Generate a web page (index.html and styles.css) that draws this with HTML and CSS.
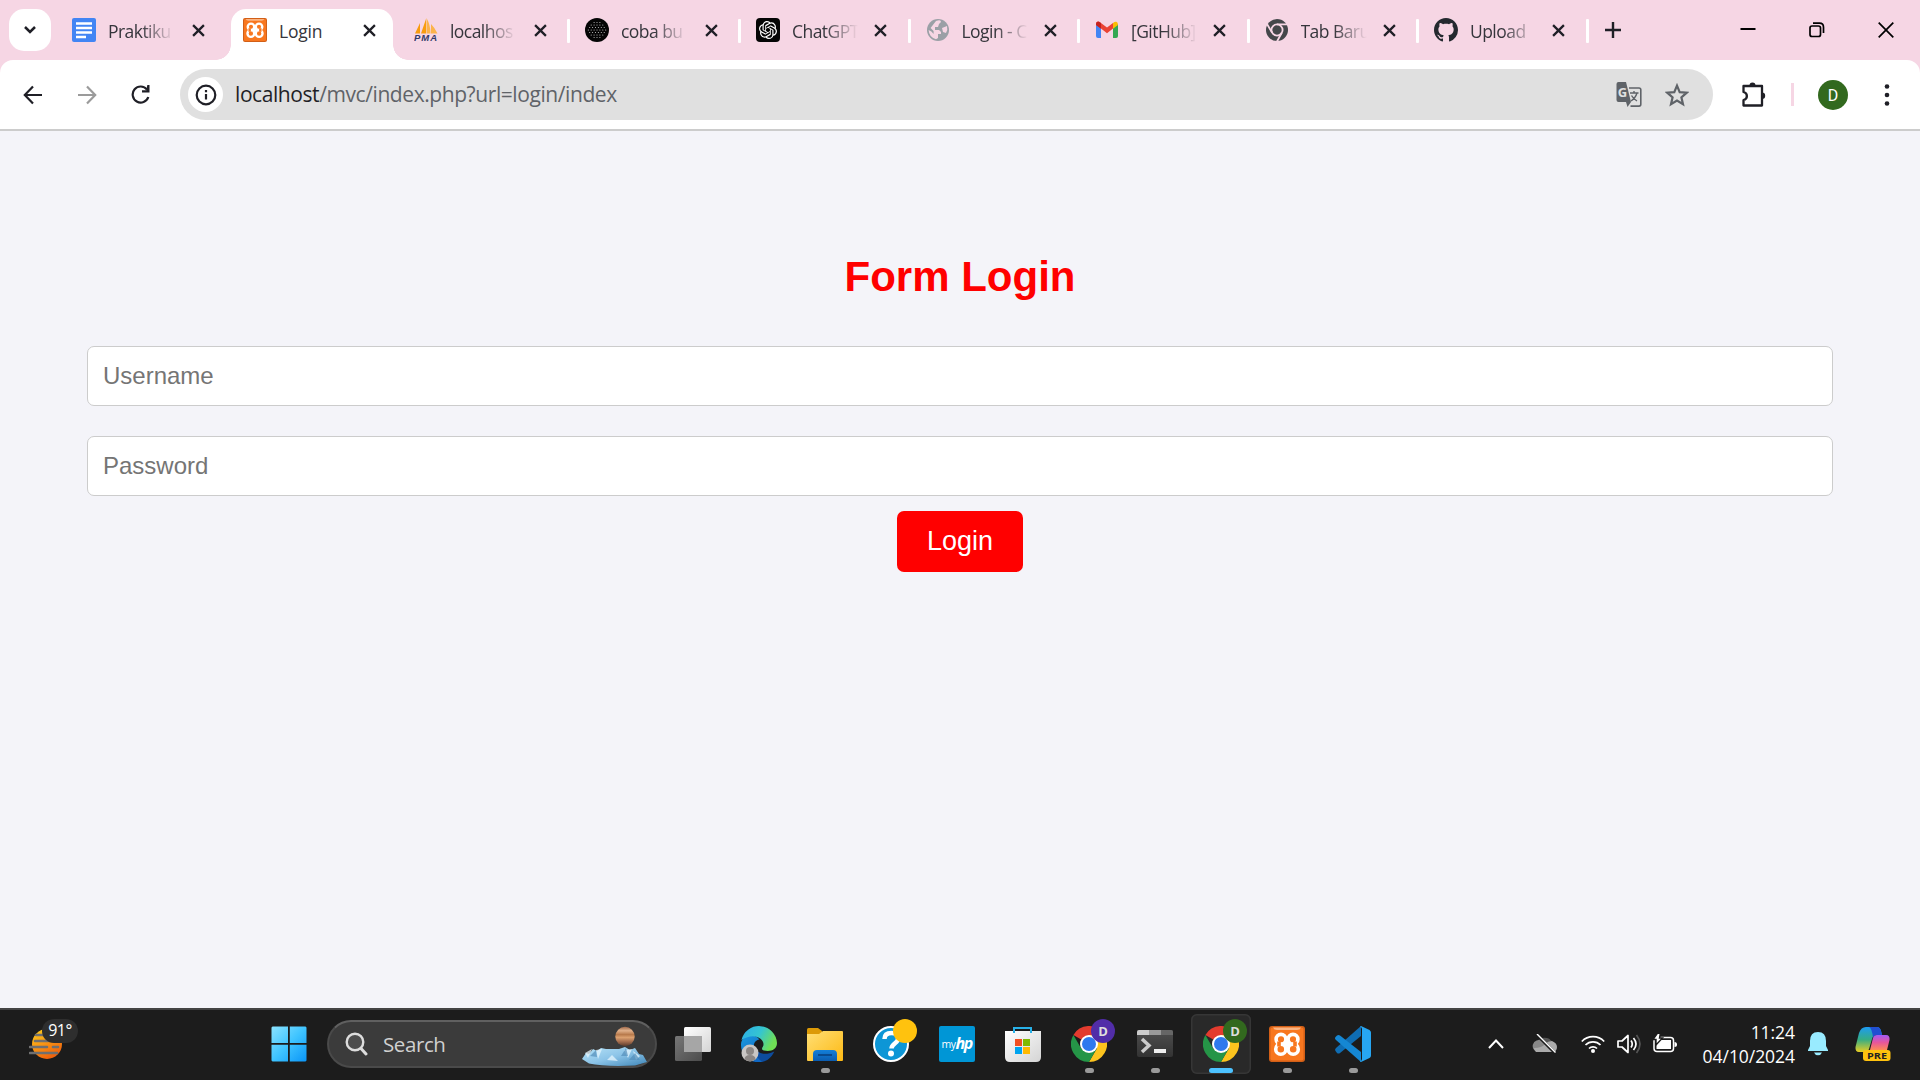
FILE: index.html
```html
<!DOCTYPE html>
<html lang="id">
<head>
<meta charset="utf-8">
<title>Login</title>
<link rel="stylesheet" href="styles.css">
</head>
<body>
<svg class="defs" width="0" height="0" aria-hidden="true">
  <defs>
    <symbol id="close" viewBox="0 0 12 12"><path d="M1 1l10 10M11 1L1 11" stroke="#1f1f26" stroke-width="2.1" fill="none"/></symbol>
    <symbol id="xampp" viewBox="0 0 36 36">
      <rect width="36" height="36" rx="3" fill="#d25f17"/>
      <rect x="1.500" y="1.500" width="33" height="33" rx="2" fill="#f8771f"/>
      <path d="M4 1.500h28q-1 2.500-4 2.500H8q-3 0-4-2.500z" fill="#fbb583"/>
      <g fill="none" stroke="#fff" stroke-width="3.600"><circle cx="12" cy="13.300" r="4.900"/><circle cx="24" cy="13.300" r="4.900"/><circle cx="11.800" cy="23.200" r="5.100"/><circle cx="24.200" cy="23.200" r="5.100"/></g>
      <path d="M10 15.500v5M26 15.500v5" stroke="#f8771f" stroke-width="3.600"/>
      <path d="M15 18h6" stroke="#fff" stroke-width="5"/>
    </symbol>
    <symbol id="chrome" viewBox="0 0 36 36">
      <path d="M18 18L2.400 9A18 18 0 0 1 33.600 9z" fill="#e33b2e"/>
      <path d="M18 9h15.600A18 18 0 0 1 18 36l7.800-13.500z" fill="#fcc31e"/>
      <path d="M2.400 9A18 18 0 0 0 18 36l7.800-13.500L18 27l-7.800-4.500z" fill="#259547"/>
      <circle cx="18" cy="18" r="9" fill="#fff"/><circle cx="18" cy="18" r="7" fill="#2e79ee"/>
    </symbol>
    <linearGradient id="win" x2="1" y2="1"><stop stop-color="#8be3ff"/><stop offset=".5" stop-color="#3fc4ff"/><stop offset="1" stop-color="#0a95f7"/></linearGradient>
    <linearGradient id="sun" x2=".5" y2="1"><stop stop-color="#ffd21c"/><stop offset="1" stop-color="#f0620c"/></linearGradient>
    <linearGradient id="white" x2="1" y2="1"><stop stop-color="#fff"/><stop offset="1" stop-color="#d4d4d4"/></linearGradient>
    <linearGradient id="grey" x2="1" y2="1"><stop stop-color="#777"/><stop offset="1" stop-color="#4c4c4c"/></linearGradient>
    <linearGradient id="edgeTop" x2="1" y2=".4"><stop stop-color="#2badeb"/><stop offset=".55" stop-color="#35c5d0"/><stop offset="1" stop-color="#6fdf55"/></linearGradient>
    <linearGradient id="edgeMid" x2=".6" y2="1"><stop stop-color="#1a9be0"/><stop offset="1" stop-color="#0f68c4"/></linearGradient>
    <linearGradient id="folder" x2="1" y2="1"><stop stop-color="#ffdf76"/><stop offset="1" stop-color="#fdb913"/></linearGradient>
    <linearGradient id="dock" y2="1" x2="0"><stop stop-color="#137fd9"/><stop offset="1" stop-color="#0b5cb0"/></linearGradient>
    <linearGradient id="term" x2="0" y2="1"><stop stop-color="#4f4f4f"/><stop offset="1" stop-color="#333"/></linearGradient>
    <linearGradient id="copA" x2="0" y2="1"><stop stop-color="#1d9bf2"/><stop offset=".5" stop-color="#35ad85"/><stop offset="1" stop-color="#e9cd22"/></linearGradient>
    <linearGradient id="copB" x2="0" y2="1"><stop stop-color="#a35bf5"/><stop offset=".5" stop-color="#e8569b"/><stop offset="1" stop-color="#ff8a55"/></linearGradient>
    <linearGradient id="ice" x2="1" y2="1"><stop stop-color="#b7e3f7"/><stop offset=".5" stop-color="#8cc4e8"/><stop offset="1" stop-color="#3e86b8"/></linearGradient>
    <linearGradient id="planet" x2="0" y2="1"><stop stop-color="#a06a4c"/><stop offset=".2" stop-color="#e0b08a"/><stop offset=".4" stop-color="#b87a4c"/><stop offset=".55" stop-color="#dba06f"/><stop offset=".75" stop-color="#a87050"/><stop offset="1" stop-color="#593a2c"/></linearGradient>
  </defs>
</svg>

<div class="screen">
  <header class="tabstrip">
    <button class="tab-search" aria-label="Search tabs"><svg width="14" height="10" viewBox="0 0 14 10"><path d="M2 2l5 5 5-5" fill="none" stroke="#1f1f26" stroke-width="2.5"/></svg></button>
    <nav class="tabs">
      <div class="tab">
        <svg class="favicon" viewBox="0 0 24 24"><rect width="24" height="24" rx="2" fill="#4285f4"/><path d="M4 5.500h16M4 10h16M4 14.500h16M4 19h10" stroke="#fff" stroke-width="2.300"/></svg>
        <span class="title">Praktiku</span><svg class="close"><use href="#close"/></svg>
      </div>
      <div class="tab active">
        <svg class="favicon"><use href="#xampp"/></svg>
        <span class="title">Login</span><svg class="close"><use href="#close"/></svg>
      </div>
      <div class="tab">
        <svg class="favicon" viewBox="0 0 24 24"><path d="M1 15.500L6 5v10.500zM7 15.500L12 1v14.500z" fill="#f89c0e"/><path d="M12.500 15.500V0q4 7 4 15.500zM17 15.500V6q4 4 6.500 9.500z" fill="#fbb34b"/><text x="0" y="23" class="pma" textLength="23">PMA</text></svg>
        <span class="title">localhos</span><svg class="close"><use href="#close"/></svg>
      </div>
      <div class="tab">
        <svg class="favicon" viewBox="0 0 24 24"><circle cx="12" cy="12" r="12" fill="#050505"/><g fill="none" stroke="#ccc" stroke-width="1.100" stroke-linecap="round" stroke-dasharray="0 2.900"><path d="M9.100 4.500h6M6.200 7h12M4.700 9.500h15M3.300 12h18M4.700 14.500h15M6.200 17h12M9.100 19.500h6"/></g></svg>
        <span class="title">coba bu</span><svg class="close"><use href="#close"/></svg>
      </div>
      <div class="tab">
        <svg class="favicon" viewBox="0 0 24 24"><rect width="24" height="24" rx="4" fill="#050505"/><path transform="translate(3 3) scale(.75)" fill="#fff" d="M22.2819 9.8211a5.9847 5.9847 0 0 0-.5157-4.9108 6.0462 6.0462 0 0 0-6.5098-2.9A6.0651 6.0651 0 0 0 4.9807 4.1818a5.9847 5.9847 0 0 0-3.9977 2.9 6.0462 6.0462 0 0 0 .7427 7.0966 5.98 5.98 0 0 0 .511 4.9107 6.051 6.051 0 0 0 6.5146 2.9001A5.9847 5.9847 0 0 0 13.2599 24a6.0557 6.0557 0 0 0 5.7718-4.2058 5.9894 5.9894 0 0 0 3.9977-2.9001 6.0557 6.0557 0 0 0-.7475-7.0729zm-9.022 12.6081a4.4755 4.4755 0 0 1-2.8764-1.0408l.1419-.0804 4.7783-2.7582a.7948.7948 0 0 0 .3927-.6813v-6.7369l2.02 1.1686a.071.071 0 0 1 .038.0615v5.5826a4.504 4.504 0 0 1-4.4945 4.4944zm-9.6607-4.1254a4.4708 4.4708 0 0 1-.5346-3.0137l.142.0852 4.783 2.7582a.7712.7712 0 0 0 .7806 0l5.8428-3.3685v2.3324a.0804.0804 0 0 1-.0332.0615L9.74 19.9502a4.4992 4.4992 0 0 1-6.1408-1.6464zM2.3408 7.8956a4.485 4.485 0 0 1 2.3655-1.9728V11.6a.7664.7664 0 0 0 .3879.6765l5.8144 3.3543-2.0201 1.1685a.0757.0757 0 0 1-.071 0l-4.8303-2.7865A4.504 4.504 0 0 1 2.3408 7.8956zm16.5963 3.8558L13.1038 8.364 15.1192 7.2a.0757.0757 0 0 1 .071 0l4.8303 2.7913a4.4944 4.4944 0 0 1-.6765 8.1042v-5.6772a.79.79 0 0 0-.407-.667zm2.0107-3.0231l-.142-.0852-4.7735-2.7818a.7759.7759 0 0 0-.7854 0L9.409 9.2297V6.8974a.0662.0662 0 0 1 .0284-.0615l4.8303-2.7866a4.4992 4.4992 0 0 1 6.6802 4.66zM8.3065 12.863l-2.02-1.1638a.0804.0804 0 0 1-.038-.0567V6.0742a4.4992 4.4992 0 0 1 7.3757-3.4537l-.142.0805L8.704 5.459a.7948.7948 0 0 0-.3927.6813zm1.0976-2.3654l2.602-1.4998 2.6069 1.4998v2.9994l-2.5974 1.4997-2.6067-1.4997Z"/></svg>
        <span class="title">ChatGPT</span><svg class="close"><use href="#close"/></svg>
      </div>
      <div class="tab">
        <svg class="favicon" viewBox="0 0 24 24"><circle cx="12" cy="12" r="11" fill="#9aa0a6"/><path d="M10 3q5-2 5 1l-2 2-1 3H9v3h4l2 2v2h-3v4l-2 1.300Q3 19 2.600 12q3 1 5 4v-3l-3-3zM16 10l5-2q1 4-1 7l-3-1z" fill="#f6d6e4"/></svg>
        <span class="title">Login - C</span><svg class="close"><use href="#close"/></svg>
      </div>
      <div class="tab">
        <svg class="favicon" viewBox="0 0 24 24"><path d="M1 6v12q0 2 2 2h3V9z" fill="#4285f4"/><path d="M18 9v11h3q2 0 2-2V6z" fill="#34a853"/><path d="M1 6q0-2 2-2.400 1.300 0 2.300.8L12 9.500l6-4.500v5.500l-6 4.700-6-4.700-5-3.500z" fill="#ea4335"/><path d="M1 6q0-2 2-2.400 1.300 0 3 1.500v5.700L1 7z" fill="#c5221f"/><path d="M18 5q2-1.700 3.300-1.200Q23 4.400 23 7l-5 3.700z" fill="#fbbc04"/></svg>
        <span class="title">[GitHub]</span><svg class="close"><use href="#close"/></svg>
      </div>
      <div class="tab">
        <svg class="favicon" viewBox="0 0 24 24"><circle cx="12" cy="12" r="11" fill="#44474a"/><circle cx="12" cy="12" r="5.600" fill="none" stroke="#f6d6e4" stroke-width="1.800"/><path d="M12 6.400h10M7.200 14.800L2 6M16.800 14.800L12 23.500" stroke="#f6d6e4" stroke-width="1.800"/></svg>
        <span class="title">Tab Baru</span><svg class="close"><use href="#close"/></svg>
      </div>
      <div class="tab">
        <svg class="favicon" viewBox="0 0 16 16"><path fill="#24292f" d="M8 0C3.580 0 0 3.580 0 8c0 3.540 2.290 6.530 5.470 7.590.4.070.55-.17.55-.38 0-.19-.01-.82-.01-1.490-2.010.37-2.530-.49-2.690-.94-.09-.23-.48-.94-.82-1.130-.28-.15-.68-.52-.01-.53.63-.01 1.080.58 1.230.82.72 1.210 1.870.87 2.330.66.070-.52.28-.87.51-1.070-1.780-.2-3.640-.89-3.640-3.950 0-.87.31-1.590.82-2.150-.08-.2-.36-1.020.08-2.120 0 0 .67-.21 2.200.82.64-.18 1.320-.27 2-.27s1.360.09 2 .27c1.530-1.040 2.200-.82 2.200-.82.44 1.100.16 1.920.08 2.120.51.56.82 1.270.82 2.150 0 3.070-1.870 3.750-3.650 3.950.29.25.54.73.54 1.480 0 1.070-.01 1.930-.01 2.200 0 .21.15.46.55.38A8.010 8.010 0 0 0 16 8c0-4.420-3.580-8-8-8z"/></svg>
        <span class="title">Upload</span><svg class="close"><use href="#close"/></svg>
      </div>
    </nav>
    <svg class="new-tab" width="16" height="16" viewBox="0 0 16 16"><path d="M8 0v16M0 8h16" stroke="#1f1f26" stroke-width="2.400"/></svg>
    <div class="window-controls">
      <svg width="16" height="16" viewBox="0 0 16 16"><path d="M.5 7h15" stroke="#000" stroke-width="2"/></svg>
      <svg width="16" height="16" viewBox="0 0 16 16"><rect x="1" y="4" width="10.500" height="10.500" rx="2" fill="none" stroke="#000" stroke-width="1.700"/><path d="M4 1.200h6.500q4 0 4 4V11" fill="none" stroke="#000" stroke-width="1.700"/></svg>
      <svg width="16" height="16" viewBox="0 0 16 16"><path d="M.7.700l14.600 14.600M15.300.700L.7 15.300" stroke="#000" stroke-width="1.700"/></svg>
    </div>
  </header>

  <div class="toolbar-wrap">
  <div class="toolbar">
    <svg class="nav-icon" viewBox="0 0 20 20"><path d="M19 10H2M10 1.500L1.800 10l8.200 8.500" fill="none" stroke="#1f1f26" stroke-width="2.200"/></svg>
    <svg class="nav-icon" viewBox="0 0 20 20"><path d="M1 10h17M10 1.500l8.200 8.500-8.200 8.500" fill="none" stroke="#9b9b9b" stroke-width="2.200"/></svg>
    <svg class="nav-icon" viewBox="0 0 20 20"><path d="M17.300 12A8 8 0 1 1 16 4.600" fill="none" stroke="#1f1f26" stroke-width="2.200"/><path d="M18.500 0v7.500H11V5.300h4.500L16.300 0z" fill="#1f1f26"/></svg>
    <div class="omnibox">
      <span class="site-info"><svg width="22" height="22" viewBox="0 0 22 22"><circle cx="11" cy="11" r="9.300" fill="none" stroke="#1f1f26" stroke-width="2.200"/><path d="M11 10v5.500M11 6v2.300" stroke="#1f1f26" stroke-width="2.200"/></svg></span>
      <span class="url"><b>localhost</b>/mvc/index.php?url=login/index</span>
      <svg class="translate" width="26" height="26" viewBox="0 0 26 26"><path d="M13 6h10q1.800 0 1.800 1.800v14.500q0 1.800-1.800 1.800h-8.500" fill="none" stroke="#5f6368" stroke-width="1.600"/><path d="M14 11h8.500M18 9v2M21 11q-1.500 5-6 8M15.500 13.500q2 3.500 5.500 5.500" fill="none" stroke="#5f6368" stroke-width="1.400"/><path d="M2.500 0H10l5 20 -3.500 5-1.500-5H2.500Q.5 20 .5 18V2q0-2 2-2z" fill="#5f6368"/><text x="1.700" y="15" class="glyph-g">G</text></svg>
      <svg class="star" width="24" height="24" viewBox="0 0 24 24"><path d="M12 2.600l2.700 6.500 7 .6-5.300 4.600 1.600 6.900-6-3.700-6 3.700 1.600-6.900L2.300 9.700l7-.6z" fill="none" stroke="#5f6368" stroke-width="2.200"/></svg>
    </div>
    <svg class="puzzle" width="26" height="26" viewBox="0 0 26 26"><path d="M2.500 4h18.500v19.500H2.500V18c4.500-1 4.500-7 0-8z" fill="none" stroke="#1f1f26" stroke-width="2.300" stroke-linejoin="round"/><path d="M8.500 3.500a3 3 0 0 1 6 0zM21 10.500a3.200 3.200 0 0 1 0 6.400z" fill="#1f1f26"/></svg>
    <i class="divider"></i>
    <span class="avatar">D</span>
    <svg class="menu" width="6" height="22" viewBox="0 0 6 22"><circle cx="3" cy="2.500" r="2.300"/><circle cx="3" cy="11" r="2.300"/><circle cx="3" cy="19.500" r="2.300"/></svg>
  </div>
  </div>

  <main class="page">
    <h1>Form Login</h1>
    <form class="login-form">
      <input type="text" placeholder="Username">
      <input type="password" placeholder="Password">
      <button type="button">Login</button>
    </form>
  </main>

  <footer class="taskbar">
    <div class="weather">
      <svg width="36" height="40" viewBox="0 0 36 40"><circle cx="18" cy="20" r="15" fill="url(#sun)"/><path d="M7 11h13M6 17h13M1 23h17M24 23h5M1 29h27" stroke="#6f6f6f" stroke-width="2.600" stroke-linecap="round"/></svg>
      <span class="temp">91°</span>
    </div>
    <svg class="start" width="36" height="36" viewBox="0 0 36 36"><path d="M1.500.500H17V17H.5V1.500zM18.800.500h15.700l1 1V17H18.800zM.5 18.800H17v16.700H1.500l-1-1zM18.800 18.800h16.700v15.700l-1 1H18.800z" fill="url(#win)"/></svg>
    <div class="search">
      <svg width="23" height="24" viewBox="0 0 23 24"><circle cx="10" cy="10" r="8.300" fill="#4d4d4d" stroke="#ddd" stroke-width="2.400"/><path d="M16 16.500l5 5.500" stroke="#ddd" stroke-width="3" stroke-linecap="round"/></svg>
      <span>Search</span>
      <svg class="scene" width="66" height="48" viewBox="0 0 66 48"><path d="M1 39l4-6 3 1 4-5 4 2 4-3 5 1h13l6-2 5 3 5-2 4 6 4 1 4 7-12 3.500q-30 1.500-46-2z" fill="url(#ice)"/><path d="M4 33l3 5 4-9zM15 30l2 9 4-10zM43 30l4 8 4-9zM52 31l3 9 4-4zM26 40l5-5 6 6z" fill="#e5f5fd" opacity=".75"/><path d="M9 36l6-6 1 7zM40 36l5-8 2 8zM48 40l6-7 5 7z" fill="#548ebb" opacity=".7"/><circle cx="44" cy="16.500" r="9.700" fill="url(#planet)"/></svg>
    </div>
    <div class="apps">
      <div class="app"><svg viewBox="0 0 36 36"><rect x="9" y="1" width="27" height="25" rx="1.500" fill="url(#white)"/><rect x="0" y="10" width="27" height="25" rx="1.500" fill="url(#grey)"/><rect x="9" y="10" width="18" height="16" fill="#a6a6a6"/></svg></div>
      <div class="app"><svg viewBox="0 0 36 36"><path d="M14 20c1 7 9 10.500 19.300 5.500C30 32.500 25 36 19 36c-7-2-9-10-5-16z" fill="#0d4c9e"/><path d="M0 19C0 9 12 6 18.500 13.500c-5 .5-7 5.500-5 11.500 1.500 5 4 8.500 7.500 10.800C9 38 0 30 0 19z" fill="url(#edgeMid)"/><path d="M.5 14A18 18 0 0 1 36 17c0 7-7 9-13 7.500-3-1-2-2.500-1-4C25 14 14 5 .5 14z" fill="url(#edgeTop)"/><circle cx="9" cy="27" r="8.500" fill="#c9c6c4"/><circle cx="9" cy="25" r="4" fill="#8b8684"/><path d="M3.500 33.500q0-4.500 5.500-4.500t5.500 4.500q-5 3.500-11 0z" fill="#8b8684"/></svg></div>
      <div class="app running"><svg viewBox="0 0 36 36"><path d="M0 3.500Q0 2 1.500 2H11l4 3v5H0z" fill="#dc9a07"/><path d="M0 8h12l4-3h19q1 0 1 1v28q0 1-1 1H1q-1 0-1-1z" fill="url(#folder)"/><path d="M6 35v-7q0-4 4-4h16q4 0 4 4v7z" fill="url(#dock)"/><path d="M11 29h14" stroke="#0a4687" stroke-width="1.800"/></svg></div>
      <div class="app"><svg viewBox="0 0 36 36"><circle cx="18" cy="18" r="17" fill="#0d96d6" stroke="#fff" stroke-width="2"/><path d="M11.500 13q0-6 7-6t6.500 6c0 4-6.500 4.500-6.500 9.500" fill="none" stroke="#fff" stroke-width="4.500"/><circle cx="18" cy="27.500" r="3" fill="#fff"/></svg><i class="badge yellow"></i></div>
      <div class="app"><svg viewBox="0 0 36 36"><rect width="36" height="36" rx="2" fill="#0096d6"/><text x="2.500" y="21.500" class="my">my<tspan class="hp" dy="1.500">hp</tspan></text></svg></div>
      <div class="app"><svg viewBox="0 0 36 36"><path d="M0 5h36v26q0 5-5 5H5q-5 0-5-5z" fill="url(#white)"/><path d="M9 7V2h17v5" fill="none" stroke="#28b1e8" stroke-width="2"/><path d="M10 13h7v7h-7z" fill="#f25022"/><path d="M18 13h7v7h-7z" fill="#7fba00"/><path d="M10 21h7v7h-7z" fill="#00a4ef"/><path d="M18 21h7v7h-7z" fill="#ffb900"/></svg></div>
      <div class="app running"><svg><use href="#chrome"/></svg><i class="badge purple">D</i></div>
      <div class="app running"><svg viewBox="0 0 36 36"><rect y="4" width="36" height="27" rx="2" fill="url(#term)"/><path d="M0 9V6q0-2 2-2h10v5z" fill="#ccc"/><path d="M12 4h12v5H12z" fill="#999"/><path d="M24 4h10q2 0 2 2v3H24z" fill="#666"/><path d="M5 13l7 6.500-7 6.500" fill="none" stroke="#ccc" stroke-width="3.500"/><rect x="17" y="23" width="12" height="4" fill="#eee"/></svg></div>
      <div class="app running current"><svg><use href="#chrome"/></svg><i class="badge green">D</i></div>
      <div class="app running"><svg><use href="#xampp"/></svg></div>
      <div class="app running"><svg viewBox="0 0 36 36"><path d="M26 0v10L5 27q-1.500 1-3 0L.5 25q-1-1.500.5-3z" fill="#0f6db3"/><path d="M26 36V26L5 9.500q-1.500-1-3 0L.5 11q-1 1.500.5 3z" fill="#1587d3"/><path d="M26 0l8.500 4Q36 5 36 6.500v23q0 1.500-1.500 2.500L26 36q-.5 0-1-1 2 0 2-2V3q0-2-2-2z" fill="#27a6f2"/></svg></div>
    </div>
    <div class="tray">
      <svg class="caret" width="18" height="12" viewBox="0 0 18 12"><path d="M2 10l7-7.500L16 10" fill="none" stroke="#fff" stroke-width="2"/></svg>
      <svg class="cloud" width="26" height="20" viewBox="0 0 26 20"><path d="M5 8a8 6.500 0 0 1 15 0l-8 5z" fill="#555"/><path d="M7 18a6 6 0 1 1 3-11l10 11z" fill="#888"/><path d="M4 18q-2-2-2-4 8 0 11-4 3-3 7-3 5 2 5 6 0 5-5 5z" fill="#aaa"/><path d="M5 1l18 18" stroke="#1c1c1c" stroke-width="3"/><path d="M5 0l18.500 18.500" stroke="#fff" stroke-width="1.400"/></svg>
      <div class="status">
        <svg width="24" height="20" viewBox="0 0 24 20"><path d="M.8 7.500a15.500 15.500 0 0 1 22.400 0M4.500 11a10.500 10.500 0 0 1 15 0M8 14.500a5.800 5.800 0 0 1 8 0" fill="none" stroke="#fff" stroke-width="1.700"/><circle cx="12" cy="17" r="2" fill="#fff"/></svg>
        <svg width="24" height="20" viewBox="0 0 24 20"><path d="M1 7h4l6-5.500v17L5 13H1z" fill="none" stroke="#fff" stroke-width="1.700" stroke-linejoin="round"/><path d="M14 6.500q2.500 3.500 0 7M16.500 4q5 6 0 12" fill="none" stroke="#fff" stroke-width="1.700"/><path d="M19.500 1q7 9 0 18" fill="none" stroke="#555" stroke-width="1.700"/></svg>
        <svg class="battery" width="24" height="20" viewBox="0 0 24 20"><rect x="1" y="3.500" width="19.500" height="14" rx="3" fill="none" stroke="#fff" stroke-width="1.500"/><rect x="3.500" y="6" width="14.500" height="9" fill="#fff"/><path d="M21.500 8q2.500 0 2.500 2.500T21.500 13z" fill="#fff"/><path d="M5-1.500L0 5.500h3V11l6.500-7H6.500L7.500-1.500z" fill="#fff" stroke="#1c1c1c" stroke-width="1.400"/></svg>
      </div>
      <div class="clock"><span>11:24</span><span>04/10/2024</span></div>
      <svg class="bell" width="20" height="24" viewBox="0 0 20 24"><path d="M10 0q8 0 8 9v5l2 4v1H0v-1l2-4V9q0-9 8-9zM6 20.500h8q-1 2.700-4 2.700t-4-2.700z" fill="#99ebff"/></svg>
      <svg class="copilot" width="36" height="36" viewBox="0 0 36 36"><path d="M11 1h11q3 0 4 4l1 4h-6q-3 0-4 4l-3 10q-1 3-4 3H4q-4 0-3.500-5L4 7q2-6 7-6z" fill="url(#copA)"/><path d="M14 1h8q3 0 4 4l1 4h-6q-2 0-3 3-1-10-4-11z" fill="#214fd2"/><path d="M22 9h9q4 0 3.500 5L32 24H15l3-12q1-3 4-3z" fill="url(#copB)"/><rect x="8" y="24" width="27.500" height="11" rx="3" fill="#ffc20e"/><text x="12" y="32.800" class="pre" textLength="20" lengthAdjust="spacingAndGlyphs">PRE</text></svg>
    </div>
  </footer>
</div>
</body>
</html>
```
FILE: styles.css
```css
* { box-sizing: border-box; }
body { margin: 0; font-family: "Open Sans", "Noto Sans", sans-serif; }
svg { display: block; flex: none; }
.defs { position: absolute; }
button { border: 0; padding: 0; }

.screen { width: 1920px; height: 1080px; display: flex; flex-direction: column; overflow: hidden; }

/* Tab strip */
.tabstrip { height: 60px; background: #f6d6e4; display: flex; align-items: center; padding-left: 9px; flex: none; }
.tab-search { width: 42px; height: 42px; border-radius: 15px; background: #fff; display: grid; place-items: center; }
.tabs { display: flex; margin-left: 9px; height: 51px; align-self: flex-end; }
.tab { width: 162px; margin-right: 9px; padding: 0 18px 9px 12px; display: flex; align-items: center; position: relative; }
.tab:nth-child(n+5) { margin-right: 7.500px; padding-right: 20px; }
.favicon { width: 24px; height: 24px; }
.title { width: 66px; flex: none; margin-left: 12px; font-size: 17.500px; font-weight: 400; line-height: 30px; letter-spacing: -.55px; padding-top: 2px; white-space: nowrap; color: #35353b; -webkit-mask-image: linear-gradient(90deg, #000 50%, transparent 100%); mask-image: linear-gradient(90deg, #000 50%, transparent 100%); }
.close { width: 13px; height: 13px; margin-left: auto; margin-right: -1px; }
.tab:nth-child(n+4)::before, .tab:last-child::after { content: ""; position: absolute; left: -6px; top: 10px; width: 3px; height: 24px; background: #fff; border-radius: 1px; }
.tab:last-child::after { left: 164px; }
.active { background: #fff; border-radius: 15px 15px 0 0; }
.active .title { letter-spacing: -.2px; -webkit-mask-image: none; mask-image: none; }
.active::before, .active::after { content: ""; position: absolute; bottom: 0; width: 15px; height: 15px; }
.active::before { left: -15px; background: radial-gradient(circle at 0 0, transparent 14.500px, #fff 15px); }
.active::after { right: -15px; background: radial-gradient(circle at 100% 0, transparent 14.500px, #fff 15px); }
.new-tab { margin-left: 13px; }
.window-controls { margin-left: auto; display: flex; gap: 53px; padding-right: 26px; }

/* Toolbar */
.toolbar-wrap { background: #f6d6e4; flex: none; }
.toolbar { height: 71px; background: #fff; border-radius: 13px 13px 0 0; border-bottom: 2px solid #ccc; display: flex; align-items: center; padding-left: 23px; }
.nav-icon { width: 20px; height: 20px; margin-right: 34px; }
.omnibox { width: 1533px; height: 51px; border-radius: 26px; background: #e0e0e0; display: flex; align-items: center; padding: 0 24px 0 8px; margin-left: -5px; }
.site-info { width: 35px; height: 35px; border-radius: 50%; background: #fff; display: grid; place-items: center; }
.url { margin-left: 12px; font-size: 21px; color: #5f6368; flex: 1; line-height: 28px; letter-spacing: -.42px; padding-bottom: 2px; }
.url b { font-weight: 400; color: #1f1f26; }
.star { margin-left: 23px; }
.glyph-g { font: bold 13px "Open Sans", sans-serif; fill: #e0e0e0; }
.puzzle { margin-left: 28px; }
.divider { width: 3px; height: 23px; background: #f6d6e4; margin-left: 24px; }
.avatar { width: 30px; height: 30px; margin-left: 24px; border-radius: 50%; background: #32691e; color: #fff; font: 16px/31px Roboto, sans-serif; text-align: center; }
.menu { margin-left: 36px; fill: #1f1f26; }

/* Login page */
.page { flex: 1; background: #f4f4f9; padding: 122px 87px 0; text-align: center; font-family: "Liberation Sans", Arial, sans-serif; }
h1 { margin: 0; color: red; font-size: 42px; line-height: 48px; }
.login-form { display: flex; flex-direction: column; align-items: center; margin-top: 45px; }
.login-form input { width: 100%; height: 60px; margin-bottom: 30px; padding: 0 15px; border: 1px solid #ccc; border-radius: 7px; background: #fff; font: 24px "Liberation Sans", Arial, sans-serif; }
.login-form input::placeholder { color: #757575; }
.login-form button { width: 126px; height: 61px; margin-top: -15px; border-radius: 7px; background: red; color: #fff; font: 27px "Liberation Sans", Arial, sans-serif; }

/* Taskbar */
.taskbar { height: 72px; flex: none; background: #1c1c1c; border-top: 2px solid #444; padding-bottom: 2px; display: flex; align-items: center; color: #fff; }
.weather { width: 50px; height: 44px; margin-left: 29px; position: relative; }
.weather > svg { margin-top: 2px; }
.temp { position: absolute; left: 13px; top: -3px; width: 36px; height: 24px; border-radius: 12px; background: #2e2e2e; font-size: 16px; line-height: 23px; text-align: center; letter-spacing: -.5px; }
.start { margin-left: 192px; }
.search { width: 330px; height: 48px; margin-left: 20px; border: 2px solid #4a4a4a; border-top-color: #606060; border-radius: 24px; background: #3b3b3b; display: flex; align-items: center; padding: 0 8px 0 16px; font-size: 20.500px; color: #d0d0d0; letter-spacing: -.4px; }
.search span { margin-left: 15px; }
.scene { margin-left: auto; }
.apps { display: flex; margin-left: 6px; gap: 6px; }
.app { width: 60px; height: 60px; border-radius: 6px; display: grid; place-items: center; position: relative; }
.app > svg { width: 36px; height: 36px; }
.running::after { content: ""; position: absolute; left: 25.500px; bottom: 1px; width: 9px; height: 5px; border-radius: 3px; background: #9a9a9a; }
.current { background: #292929; box-shadow: inset 0 0 0 1.500px #363636; }
.current::after { left: 18px; width: 24px; background: #4cc2ff; }
.badge { position: absolute; left: 32px; top: 5px; width: 24px; height: 24px; border-radius: 50%; font: bold 13px/24px "Open Sans", sans-serif; text-align: center; color: #ddd; }
.yellow { background: #ffc20e; }
.purple { background: #512da8; }
.green { background: #32691e; }
.my { font: 10.500px "Open Sans", sans-serif; letter-spacing: -.5px; fill: #fff; }
.hp { font: italic bold 16px "Open Sans", sans-serif; letter-spacing: -1.500px; }
.pma { font: italic bold 9.500px "Liberation Sans", Arial, sans-serif; fill: #333a68; }
.pre { font: bold 9px "Open Sans", sans-serif; fill: #222; }

.tray { margin-left: auto; display: flex; align-items: center; padding-right: 29px; }
.cloud { margin-left: 27px; }
.status { display: flex; align-items: center; gap: 12px; margin-left: 23px; }
.clock { width: 100px; margin-left: 18px; display: flex; flex-direction: column; text-align: right; font-size: 17.500px; line-height: 24px; letter-spacing: -.05px; }
.bell { margin-left: 13px; }
.copilot { margin-left: 27px; }
```
